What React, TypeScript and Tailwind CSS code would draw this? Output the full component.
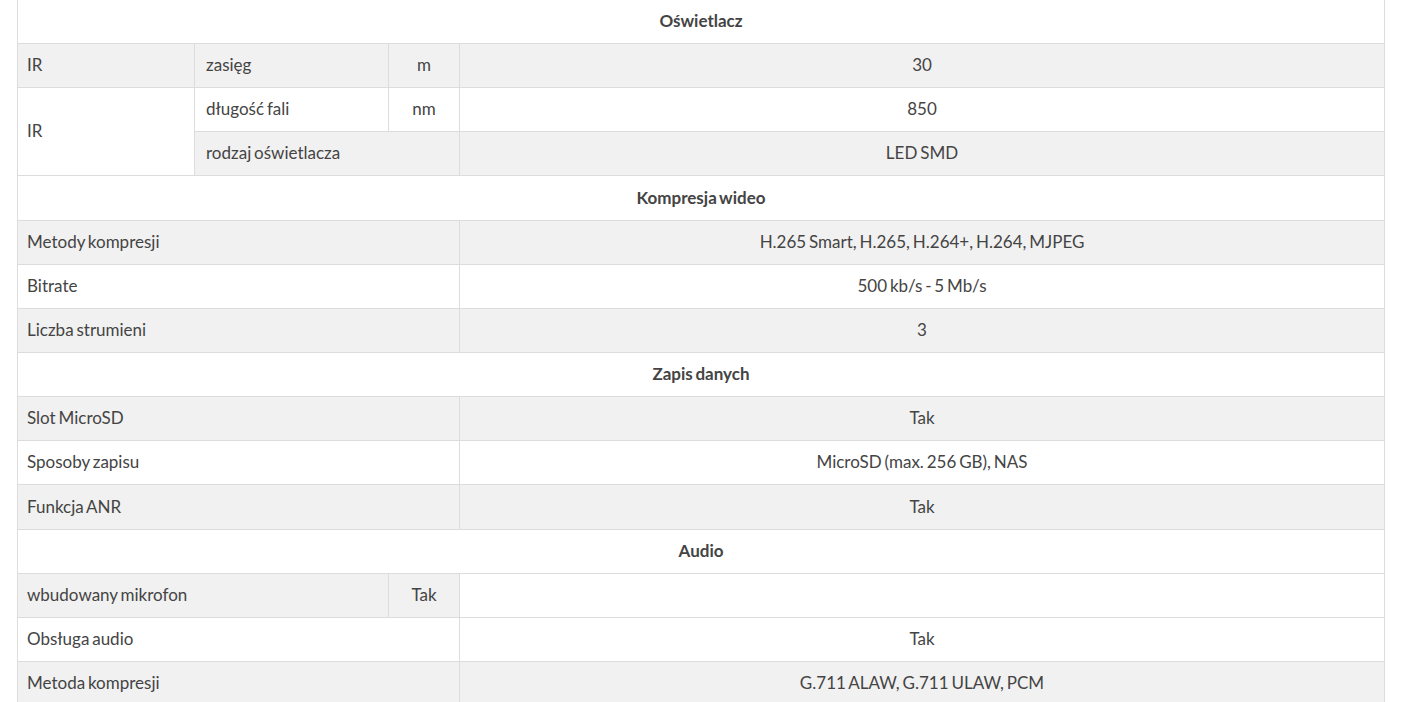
import React from 'react';

const sections: { title: string; rows: { label: string; value: string; tall?: boolean }[]; tall?: boolean }[] = [
  {
    title: 'Kompresja wideo',
    tall: true,
    rows: [
      { label: 'Metody kompresji', value: 'H.265 Smart, H.265, H.264+, H.264, MJPEG' },
      { label: 'Bitrate', value: '500 kb/s - 5 Mb/s' },
      { label: 'Liczba strumieni', value: '3' },
    ],
  },
  {
    title: 'Zapis danych',
    rows: [
      { label: 'Slot MicroSD', value: 'Tak' },
      { label: 'Sposoby zapisu', value: 'MicroSD (max. 256 GB), NAS' },
      { label: 'Funkcja ANR', value: 'Tak', tall: true },
    ],
  },
];

const td = 'border border-[#dcdcdc] h-[44px] px-[9px] align-middle';
const tdTall = 'border border-[#dcdcdc] h-[45px] px-[9px] align-middle';

const SectionRow: React.FC<{ title: string; tall?: boolean }> = ({ title, tall }) => (
  <tr className="bg-white">
    <td colSpan={4} className={`${tall ? tdTall : td} text-center font-bold`}>
      {title}
    </td>
  </tr>
);

const PlainRow: React.FC<{ label: string; value: string; gray: boolean; tall?: boolean }> = ({
  label,
  value,
  gray,
  tall,
}) => (
  <tr className={gray ? 'bg-[#f1f1f1]' : 'bg-white'}>
    <td colSpan={3} className={tall ? tdTall : td}>{label}</td>
    <td className={`${tall ? tdTall : td} text-center`}>{value}</td>
  </tr>
);

export default function App() {
  return (
    <div className="bg-white w-[1402px] h-[702px] overflow-hidden">
      <div
        className="pl-[17px] pr-[17px] -mt-px text-[17px] text-[#444444] [word-spacing:-1.5px]"
        style={{ fontFamily: 'Lato, "Liberation Sans", sans-serif' }}
      >
        <table className="w-[1368px] table-fixed border-collapse">
          <colgroup>
            <col className="w-[177px]" />
            <col className="w-[194px]" />
            <col className="w-[71px]" />
            <col />
          </colgroup>
          <tbody>
            <tr className="bg-white">
              <td colSpan={4} className={`${td} border-t-0 text-center font-bold`}>
                Oświetlacz
              </td>
            </tr>
            <tr className="bg-[#f1f1f1]">
              <td className={td}>IR</td>
              <td className={`${td} pl-[11px]`}>zasięg</td>
              <td className={`${td} text-center`}>m</td>
              <td className={`${td} text-center`}>30</td>
            </tr>
            <tr className="bg-white">
              <td rowSpan={2} className={td}>IR</td>
              <td className={`${td} pl-[11px]`}>długość fali</td>
              <td className={`${td} text-center`}>nm</td>
              <td className={`${td} text-center`}>850</td>
            </tr>
            <tr className="bg-[#f1f1f1]">
              <td colSpan={2} className={`${td} pl-[11px]`}>rodzaj oświetlacza</td>
              <td className={`${td} text-center`}>LED SMD</td>
            </tr>
            {sections.map((s) => (
              <React.Fragment key={s.title}>
                <SectionRow title={s.title} tall={s.tall} />
                {s.rows.map((r, i) => (
                  <PlainRow key={r.label} label={r.label} value={r.value} gray={i % 2 === 0} tall={r.tall} />
                ))}
              </React.Fragment>
            ))}
            <SectionRow title="Audio" />
            <tr className="bg-[#f1f1f1]">
              <td colSpan={2} className={td}>wbudowany mikrofon</td>
              <td className={`${td} text-center`}>Tak</td>
              <td className={`${td} bg-white`}></td>
            </tr>
            <PlainRow label="Obsługa audio" value="Tak" gray={false} />
            <PlainRow label="Metoda kompresji" value="G.711 ALAW, G.711 ULAW, PCM" gray />
          </tbody>
        </table>
      </div>
    </div>
  );
}
